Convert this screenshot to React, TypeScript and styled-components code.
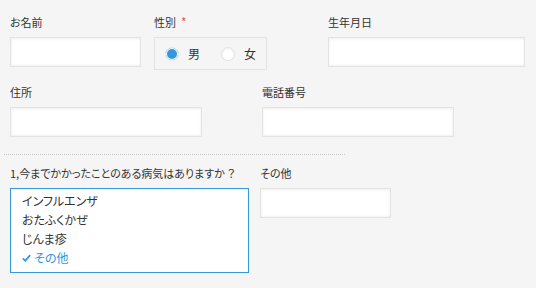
import React from "react";
import styled, { createGlobalStyle } from "styled-components";

const Global = createGlobalStyle`
  html, body { margin: 0; padding: 0; background: #f5f5f5; }
  body {
    font-family: "Noto Sans CJK JP", "Noto Sans", sans-serif;
    font-size: 12px;
    color: #333;
    font-feature-settings: "palt";
  }
`;

const Form = styled.div`
  width: 536px;
  height: 288px;
  padding-top: 14px;
  box-sizing: border-box;
  display: flex;
  flex-direction: column;
`;

const Row = styled.div<{ $top?: number }>`
  display: flex;
  align-items: flex-start;
  padding-left: 10px;
  margin-top: ${(p) => p.$top ?? 0}px;
`;

const Field = styled.div<{ $w: number }>`
  width: ${(p) => p.$w}px;
  flex: none;
  display: flex;
  flex-direction: column;
`;

const Label = styled.div`
  height: 16px;
  line-height: 16px;
  font-size: 11px;
  margin-bottom: 7px;
  white-space: nowrap;
`;

const Required = styled.span`
  color: #e9594c;
  font-size: 12px;
  margin-left: 5px;
`;

const TextInput = styled.input<{ $w: number }>`
  width: ${(p) => p.$w}px;
  height: 30px;
  box-sizing: border-box;
  border: 1px solid #e3e3e3;
  background: #fff;
  box-shadow: inset 0 1px 3px #f0f0f0, inset 0 -1px 2px #f3f3f3;
  margin: 0;
  padding: 0 8px;
  font: inherit;
  outline: none;
`;

const RadioGroup = styled.div`
  width: 113px;
  height: 33px;
  box-sizing: border-box;
  border: 1px solid #e3e3e3;
  display: flex;
  align-items: center;
  padding-left: 10px;
`;

const RadioItem = styled.label`
  display: flex;
  align-items: center;
  margin-right: 21px;
  &:last-child { margin-right: 0; }
`;

const RadioMark = styled.span<{ $on?: boolean }>`
  width: 14px;
  height: 14px;
  box-sizing: border-box;
  border-radius: 50%;
  border: 1px solid ${(p) => (p.$on ? "#e6eef5" : "#e3e3e3")};
  background: ${(p) => (p.$on ? "#3498db" : "#fff")};
  box-shadow: ${(p) => (p.$on ? "inset 0 0 0 1px #fff" : "inset 0 1px 2px #eee")};
  margin-right: 9px;
`;

const Divider = styled.div`
  margin: 17px 0 10px 4px;
  width: 341px;
  border-top: 1px dotted #c8c8c8;
`;

const ListBox = styled.div`
  width: 239px;
  height: 85px;
  box-sizing: border-box;
  border: 1px solid #3498db;
  background: #fff;
  padding: 2px 0 0 11px;
`;

const ListItem = styled.div<{ $on?: boolean }>`
  height: 19px;
  line-height: 19px;
  display: flex;
  align-items: center;
  color: ${(p) => (p.$on ? "#3498db" : "#333")};
`;

const Check = styled.svg`
  width: 9px;
  height: 8px;
  margin-right: 3px;
`;

export default function App() {
  return (
    <>
      <Global />
      <Form>
        <Row>
          <Field $w={144}>
            <Label>お名前</Label>
            <TextInput $w={131} />
          </Field>
          <Field $w={174}>
            <Label>
              性別<Required>*</Required>
            </Label>
            <RadioGroup>
              <RadioItem>
                <RadioMark $on />男
              </RadioItem>
              <RadioItem>
                <RadioMark />女
              </RadioItem>
            </RadioGroup>
          </Field>
          <Field $w={197}>
            <Label>生年月日</Label>
            <TextInput $w={197} />
          </Field>
        </Row>
        <Row $top={14}>
          <Field $w={252}>
            <Label>住所</Label>
            <TextInput $w={192} />
          </Field>
          <Field $w={192}>
            <Label>電話番号</Label>
            <TextInput $w={192} />
          </Field>
        </Row>
        <Divider />
        <Row>
          <Field $w={250}>
            <Label>1,今までかかったことのある病気はありますか ？</Label>
            <ListBox>
              <ListItem>インフルエンザ</ListItem>
              <ListItem>おたふくかぜ</ListItem>
              <ListItem>じんま疹</ListItem>
              <ListItem $on>
                <Check viewBox="0 0 9 8">
                  <path d="M0.8 4.3 L3.3 6.6 L8.2 1.2" fill="none" stroke="#3498db" strokeWidth="1.8" />
                </Check>
                その他
              </ListItem>
            </ListBox>
          </Field>
          <Field $w={131}>
            <Label>その他</Label>
            <TextInput $w={131} />
          </Field>
        </Row>
      </Form>
    </>
  );
}
